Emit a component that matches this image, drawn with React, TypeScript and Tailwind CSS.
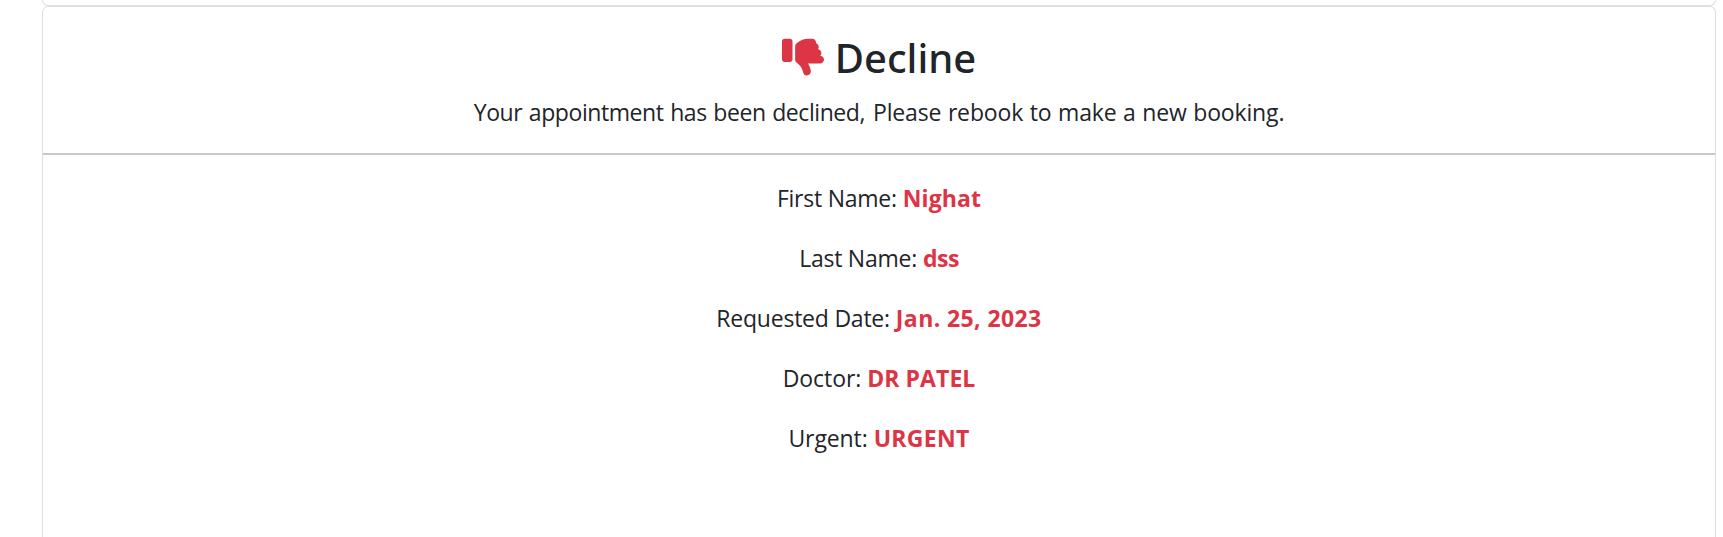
const details = [
  { label: "First Name:", value: "Nighat", labelClass: "tracking-[-0.25px]", valueClass: "tracking-[0.1px]" },
  { label: "Last Name:", value: "dss", labelClass: "tracking-[-0.25px]", valueClass: "tracking-[-0.5px]" },
  { label: "Requested Date:", value: "Jan. 25, 2023", labelClass: "tracking-[-0.23px]", valueClass: "tracking-[0.4px]" },
  { label: "Doctor:", value: "DR PATEL", labelClass: "tracking-[-0.05px]", valueClass: "tracking-[0.05px]" },
  { label: "Urgent:", value: "URGENT", labelClass: "tracking-[-0.1px]", valueClass: "tracking-[0.3px]" },
];

function ThumbsDown() {
  return (
    <svg viewBox="0 0 512 512" className="size-[42px] shrink-0 fill-[#dc3545]" aria-hidden="true">
      <path d="M96 32.04H32c-17.67 0-32 14.32-32 31.1v223.1c0 17.67 14.33 31.1 32 31.1h64c17.67 0 32-14.33 32-31.1V64.03C128 46.36 113.7 32.04 96 32.04zM467.3 240.2C475.1 231.7 480 220.4 480 207.9c0-23.47-16.87-42.92-39.14-47.09C445.3 153.6 448 145.1 448 135.1c0-21.32-14-39.18-33.25-45.43C415.5 87.12 416 83.61 416 79.98C416 53.47 394.5 32 368 32h-58.69c-34.61 0-68.28 11.22-95.97 31.98L179.2 89.57C167.1 98.63 160 112.9 160 127.1l.1074 160c0 0-.0234-.0234 0 0c.0703 13.99 6.123 27.94 17.91 37.36l16.3 13.03C276.2 403.9 239.4 480 302.5 480c30.96 0 49.47-24.52 49.47-48.11c0-15.15-11.76-58.12-34.52-96.02H464c26.52 0 48-21.47 48-47.98C512 262.5 492.2 241.9 467.3 240.2z" />
    </svg>
  );
}

export default function App() {
  return (
    <main className="flex h-screen flex-col overflow-hidden bg-white pr-[7px] pl-[42px] font-['Open_Sans',sans-serif] text-[23px] leading-9 text-[#212529]">
      <div className="h-1.5 shrink-0 rounded-b-md border border-t-0 border-[#dfdfdf]" />
      <section className="grow rounded-t-md border border-b-0 border-[#dfdfdf] text-center">
        <header className="border-b-2 border-[#c8c8c9] pt-6 pb-[23px]">
          <h2 className="mb-3 flex h-[51px] items-center justify-center gap-[11px] font-['Noto_Sans',sans-serif] text-[40px] leading-[51px] font-medium">
            <ThumbsDown />
            <span className="pt-0.5">Decline</span>
          </h2>
          <p className="[word-spacing:2px]">
            <span className="tracking-[-0.42px] [word-spacing:1px]">Your appointment has been declined,</span>{" "}
            <span className="tracking-[-0.16px] [word-spacing:0.8px]">Please rebook to make a new booking.</span>
          </p>
        </header>
        <div className="flex flex-col gap-6 pt-[25px]">
          {details.map(({ label, value, labelClass, valueClass }) => (
            <p key={label}>
              <span className={labelClass}>{label}</span>{" "}
              <b className={`font-bold text-[#dc3545] ${valueClass}`}>{value}</b>
            </p>
          ))}
        </div>
      </section>
    </main>
  );
}
